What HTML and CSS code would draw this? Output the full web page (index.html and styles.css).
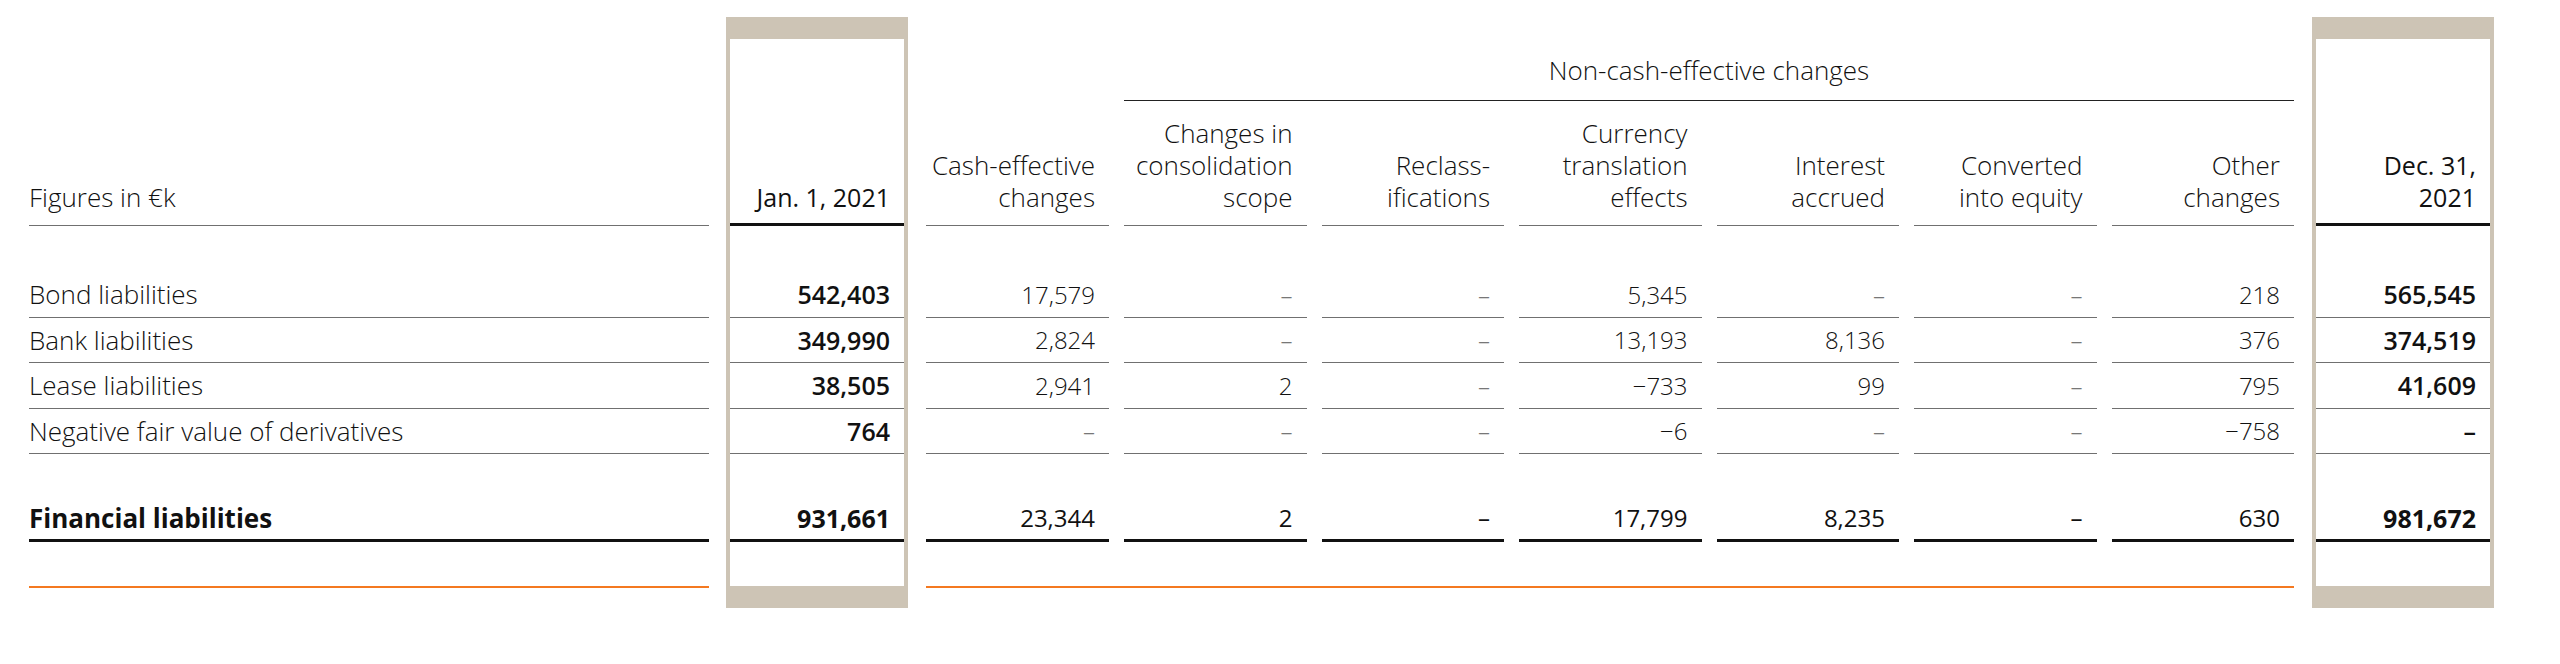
FILE: index.html
```html
<!DOCTYPE html>
<html lang="en">
<head>
<meta charset="utf-8">
<title>Financial liabilities</title>
<link rel="stylesheet" href="styles.css">
</head>
<body>
<div class="table">
  <div class="col label-col">
    <div class="hd"><span>Figures in €k</span></div>
    <div class="sp"></div>
    <div class="cell">Bond liabilities</div>
    <div class="cell">Bank liabilities</div>
    <div class="cell">Lease liabilities</div>
    <div class="cell">Negative fair value of derivatives</div>
    <div class="sp2"></div>
    <div class="cell total">Financial liabilities</div>
    <div class="end"></div>
  </div>

  <div class="col box box-jan">
    <div class="hd"><span>Jan. 1, 2021</span></div>
    <div class="sp"></div>
    <div class="cell">542,403</div>
    <div class="cell">349,990</div>
    <div class="cell">38,505</div>
    <div class="cell">764</div>
    <div class="sp2"></div>
    <div class="cell total">931,661</div>
    <div class="end"></div>
  </div>

  <div class="col num cash">
    <div class="hd"><span>Cash-effective<br>changes</span></div>
    <div class="sp"></div>
    <div class="cell">17,579</div>
    <div class="cell">2,824</div>
    <div class="cell">2,941</div>
    <div class="cell dash">–</div>
    <div class="sp2"></div>
    <div class="cell total">23,344</div>
    <div class="end"></div>
  </div>

  <div class="group">
    <div class="group-hd">Non-cash-effective changes</div>
    <div class="group-cols">
      <div class="col num">
        <div class="hd sub"><span>Changes in<br>consolidation<br>scope</span></div>
        <div class="sp"></div>
        <div class="cell dash">–</div>
        <div class="cell dash">–</div>
        <div class="cell">2</div>
        <div class="cell dash">–</div>
        <div class="sp2"></div>
        <div class="cell total">2</div>
        <div class="end"></div>
      </div>
      <div class="col num">
        <div class="hd sub"><span>Reclass-<br>ifications</span></div>
        <div class="sp"></div>
        <div class="cell dash">–</div>
        <div class="cell dash">–</div>
        <div class="cell dash">–</div>
        <div class="cell dash">–</div>
        <div class="sp2"></div>
        <div class="cell total">–</div>
        <div class="end"></div>
      </div>
      <div class="col num">
        <div class="hd sub"><span>Currency<br>translation<br>effects</span></div>
        <div class="sp"></div>
        <div class="cell">5,345</div>
        <div class="cell">13,193</div>
        <div class="cell">−733</div>
        <div class="cell">−6</div>
        <div class="sp2"></div>
        <div class="cell total">17,799</div>
        <div class="end"></div>
      </div>
      <div class="col num">
        <div class="hd sub"><span>Interest<br>accrued</span></div>
        <div class="sp"></div>
        <div class="cell dash">–</div>
        <div class="cell">8,136</div>
        <div class="cell">99</div>
        <div class="cell dash">–</div>
        <div class="sp2"></div>
        <div class="cell total">8,235</div>
        <div class="end"></div>
      </div>
      <div class="col num">
        <div class="hd sub"><span>Converted<br>into equity</span></div>
        <div class="sp"></div>
        <div class="cell dash">–</div>
        <div class="cell dash">–</div>
        <div class="cell dash">–</div>
        <div class="cell dash">–</div>
        <div class="sp2"></div>
        <div class="cell total">–</div>
        <div class="end"></div>
      </div>
      <div class="col num">
        <div class="hd sub"><span>Other<br>changes</span></div>
        <div class="sp"></div>
        <div class="cell">218</div>
        <div class="cell">376</div>
        <div class="cell">795</div>
        <div class="cell">−758</div>
        <div class="sp2"></div>
        <div class="cell total">630</div>
        <div class="end"></div>
      </div>
    </div>
  </div>

  <div class="col box box-dec">
    <div class="hd"><span>Dec. 31,<br>2021</span></div>
    <div class="sp"></div>
    <div class="cell">565,545</div>
    <div class="cell">374,519</div>
    <div class="cell">41,609</div>
    <div class="cell">–</div>
    <div class="sp2"></div>
    <div class="cell total">981,672</div>
    <div class="end"></div>
  </div>
</div>
</body>
</html>
```

FILE: styles.css
```css
* { box-sizing: border-box; }

html, body {
  margin: 0;
  padding: 0;
  background: #ffffff;
}

body {
  font-family: "Open Sans", "Noto Sans", "Liberation Sans", sans-serif;
  font-weight: 300;
  font-size: 24px;
  color: #111;
}

.table {
  display: flex;
  align-items: flex-start;
  padding: 17px 0 0 29px;
}

.col {
  display: flex;
  flex-direction: column;
  border-top: 22px solid transparent;
}

.label-col { width: 680px; }

.label-col .cell,
.hd,
.group-hd {
  font-size: 26px;
}

.cash {
  width: 183px;
  margin-left: 18px;
}

.group {
  width: 1170px;
  margin-left: 15px;
  padding-top: 22px;
}

.group-hd {
  height: 62px;
  border-bottom: 1.5px solid #222;
  text-align: center;
  line-height: 32px;
  padding-top: 15px;
}

.group-cols {
  display: flex;
  gap: 15px;
}

.group-cols .col {
  flex: 1 1 0;
  border-top: 0;
}

.box {
  width: 182px;
  border: 4px solid #cdc4b5;
  border-top-width: 22px;
  border-bottom-width: 22px;
}

.box-jan { margin-left: 17px; }
.box-dec { margin-left: 18px; }

/* header cells */
.hd {
  height: 187px;
  display: flex;
  align-items: flex-end;
  padding-bottom: 12px;
  line-height: 32px;
  border-bottom: 1.5px solid #707070;
  white-space: nowrap;
}

.hd.sub { height: 125px; }

.num .hd,
.box .hd {
  justify-content: flex-end;
  text-align: right;
  padding-right: 14px;
}

.box .hd {
  font-size: 25px;
  font-weight: 500;
  border-bottom: 3px solid #111;
  padding-bottom: 10.5px;
}

/* body cells */
.sp { height: 46px; }

.cell {
  height: 45.5px;
  display: flex;
  align-items: center;
  border-bottom: 1.5px solid #707070;
  white-space: nowrap;
}

.num .cell,
.box .cell {
  justify-content: flex-end;
  padding-right: 14px;
}

.box .cell {
  font-size: 25px;
  font-weight: 600;
}

.cell.dash { color: #777; }

.sp2 { height: 42px; }

.cell.total {
  border-bottom: 3px solid #111;
  font-weight: 400;
  padding-top: 1px;
}

.label-col .cell.total { font-weight: 700; }
.box .cell.total { font-weight: 700; }

.end {
  height: 46px;
  border-bottom: 2px solid #f47920;
}

.cash .end,
.group-cols .col:not(:last-child) .end {
  margin-right: -15px;
}

.box .end {
  height: 44px;
  border-bottom: 0;
}
```
